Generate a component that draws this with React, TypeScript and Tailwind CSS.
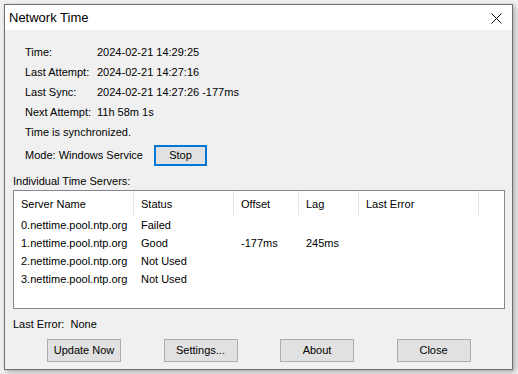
const INFO = [
  { label: "Time:", value: "2024-02-21 14:29:25" },
  { label: "Last Attempt:", value: "2024-02-21 14:27:16" },
  { label: "Last Sync:", value: "2024-02-21 14:27:26 -177ms" },
  { label: "Next Attempt:", value: "11h 58m 1s" },
];

const COLUMNS = [
  { name: "Server Name", w: "w-[120px]" },
  { name: "Status", w: "w-[100px]" },
  { name: "Offset", w: "w-[65px]" },
  { name: "Lag", w: "w-[60px]" },
  { name: "Last Error", w: "w-[120px]" },
];

const SERVERS = [
  { name: "0.nettime.pool.ntp.org", status: "Failed", offset: "", lag: "" },
  { name: "1.nettime.pool.ntp.org", status: "Good", offset: "-177ms", lag: "245ms" },
  { name: "2.nettime.pool.ntp.org", status: "Not Used", offset: "", lag: "" },
  { name: "3.nettime.pool.ntp.org", status: "Not Used", offset: "", lag: "" },
];

function Button({ label }: { label: string }) {
  return (
    <button className="flex h-[23px] w-[74px] items-center justify-center border border-[#adadad] bg-[#e1e1e1] text-[11px] text-black">
      {label}
    </button>
  );
}

export default function App() {
  return (
    <div
      className="h-[374px] w-[518px] bg-[#f0f0f0] pl-[4px] pt-[4px] text-[11px] text-black"
      style={{ fontFamily: '"Liberation Sans", Arial, sans-serif' }}
    >
      <div className="flex h-[366px] w-[509px] flex-col border border-[#707070] bg-[#f0f0f0] shadow-[2px_2px_5px_rgba(0,0,0,0.3)]">
        {/* Title bar */}
        <div className="flex h-[25px] items-center justify-between bg-white pl-[4px] pr-[10px]">
          <span className="text-[13px] leading-none">Network Time</span>
          <svg width="11" height="11" viewBox="0 0 11 11" className="mt-[1px]">
            <path d="M0.5 0.5 L10.5 10.5 M10.5 0.5 L0.5 10.5" stroke="#111" strokeWidth="1" />
          </svg>
        </div>

        {/* Body */}
        <div className="flex flex-1 flex-col pl-[8px] pt-[12px]">
          <div className="pl-[12px]">
            {INFO.map((r) => (
              <div key={r.label} className="flex h-[20px] items-center">
                <span className="w-[72px]">{r.label}</span>
                <span>{r.value}</span>
              </div>
            ))}
            <div className="flex h-[20px] items-center">Time is synchronized.</div>
            <div className="mt-[3px] flex h-[21px] items-center">
              <span className="w-[129px]">Mode: Windows Service</span>
              <button className="flex h-[21px] w-[53px] items-center justify-center border-2 border-[#0078d7] bg-[#e1e1e1] text-[11px]">
                Stop
              </button>
            </div>
          </div>

          <div className="mt-[8px] flex h-[14px] items-center">Individual Time Servers:</div>

          <div className="mt-[2px] h-[119px] w-[492px] border border-[#828790] bg-white">
            <div className="flex h-[25px] items-start">
              {COLUMNS.map((c) => (
                <div key={c.name} className={`${c.w} flex h-[24px] items-center border-r border-[#e5e5e5] pl-[7px] pt-[3px]`}>
                  {c.name}
                </div>
              ))}
            </div>
            {SERVERS.map((s) => (
              <div key={s.name} className="flex h-[18px] items-center">
                <div className="w-[120px] pl-[7px]">{s.name}</div>
                <div className="w-[100px] pl-[7px]">{s.status}</div>
                <div className="w-[65px] pl-[7px]">{s.offset}</div>
                <div className="w-[60px] pl-[7px]">{s.lag}</div>
              </div>
            ))}
          </div>

          <div className="mt-[8px] flex h-[14px] items-center">Last Error:&nbsp; None</div>

          <div className="mt-[8px] flex gap-[42.5px] pl-[34px]">
            <Button label="Update Now" />
            <Button label="Settings..." />
            <Button label="About" />
            <Button label="Close" />
          </div>
        </div>
      </div>
    </div>
  );
}
